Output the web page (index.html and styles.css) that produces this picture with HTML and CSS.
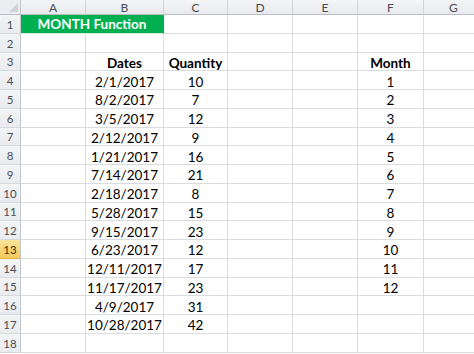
FILE: index.html
```html
<!DOCTYPE html>
<html>
<head>
<meta charset="utf-8">
<link rel="stylesheet" href="styles.css">
</head>
<body>
<div class="sheet">
  <div class="row head">
    <div class="rh corner"><span class="tri"></span></div>
    <div class="c ca ch">A</div><div class="c cb ch">B</div><div class="c cc ch">C</div><div class="c cd ch">D</div><div class="c ce ch">E</div><div class="c cf ch">F</div><div class="c cg ch">G</div>
  </div>
  <div class="row">
    <div class="rh">1</div>
    <div class="c cab title">MONTH Function</div><div class="c cc"></div><div class="c cd"></div><div class="c ce"></div><div class="c cf"></div><div class="c cg"></div>
  </div>
  <div class="row">
    <div class="rh">2</div>
    <div class="c ca"></div><div class="c cb"></div><div class="c cc"></div><div class="c cd"></div><div class="c ce"></div><div class="c cf"></div><div class="c cg"></div>
  </div>
  <div class="row">
    <div class="rh">3</div>
    <div class="c ca"></div><div class="c cb b">Dates</div><div class="c cc b">Quantity</div><div class="c cd"></div><div class="c ce"></div><div class="c cf b">Month</div><div class="c cg"></div>
  </div>
  <div class="row">
    <div class="rh">4</div>
    <div class="c ca"></div><div class="c cb">2/1/2017</div><div class="c cc">10</div><div class="c cd"></div><div class="c ce"></div><div class="c cf">1</div><div class="c cg"></div>
  </div>
  <div class="row">
    <div class="rh">5</div>
    <div class="c ca"></div><div class="c cb">8/2/2017</div><div class="c cc">7</div><div class="c cd"></div><div class="c ce"></div><div class="c cf">2</div><div class="c cg"></div>
  </div>
  <div class="row">
    <div class="rh">6</div>
    <div class="c ca"></div><div class="c cb">3/5/2017</div><div class="c cc">12</div><div class="c cd"></div><div class="c ce"></div><div class="c cf">3</div><div class="c cg"></div>
  </div>
  <div class="row">
    <div class="rh">7</div>
    <div class="c ca"></div><div class="c cb">2/12/2017</div><div class="c cc">9</div><div class="c cd"></div><div class="c ce"></div><div class="c cf">4</div><div class="c cg"></div>
  </div>
  <div class="row">
    <div class="rh">8</div>
    <div class="c ca"></div><div class="c cb">1/21/2017</div><div class="c cc">16</div><div class="c cd"></div><div class="c ce"></div><div class="c cf">5</div><div class="c cg"></div>
  </div>
  <div class="row">
    <div class="rh">9</div>
    <div class="c ca"></div><div class="c cb">7/14/2017</div><div class="c cc">21</div><div class="c cd"></div><div class="c ce"></div><div class="c cf">6</div><div class="c cg"></div>
  </div>
  <div class="row">
    <div class="rh">10</div>
    <div class="c ca"></div><div class="c cb">2/18/2017</div><div class="c cc">8</div><div class="c cd"></div><div class="c ce"></div><div class="c cf">7</div><div class="c cg"></div>
  </div>
  <div class="row">
    <div class="rh">11</div>
    <div class="c ca"></div><div class="c cb">5/28/2017</div><div class="c cc">15</div><div class="c cd"></div><div class="c ce"></div><div class="c cf">8</div><div class="c cg"></div>
  </div>
  <div class="row">
    <div class="rh">12</div>
    <div class="c ca"></div><div class="c cb">9/15/2017</div><div class="c cc">23</div><div class="c cd"></div><div class="c ce"></div><div class="c cf">9</div><div class="c cg"></div>
  </div>
  <div class="row">
    <div class="rh active">13</div>
    <div class="c ca"></div><div class="c cb">6/23/2017</div><div class="c cc">12</div><div class="c cd"></div><div class="c ce"></div><div class="c cf">10</div><div class="c cg"></div>
  </div>
  <div class="row">
    <div class="rh">14</div>
    <div class="c ca"></div><div class="c cb">12/11/2017</div><div class="c cc">17</div><div class="c cd"></div><div class="c ce"></div><div class="c cf">11</div><div class="c cg"></div>
  </div>
  <div class="row">
    <div class="rh">15</div>
    <div class="c ca"></div><div class="c cb">11/17/2017</div><div class="c cc">23</div><div class="c cd"></div><div class="c ce"></div><div class="c cf">12</div><div class="c cg"></div>
  </div>
  <div class="row">
    <div class="rh">16</div>
    <div class="c ca"></div><div class="c cb">4/9/2017</div><div class="c cc">31</div><div class="c cd"></div><div class="c ce"></div><div class="c cf"></div><div class="c cg"></div>
  </div>
  <div class="row">
    <div class="rh">17</div>
    <div class="c ca"></div><div class="c cb">10/28/2017</div><div class="c cc">42</div><div class="c cd"></div><div class="c ce"></div><div class="c cf"></div><div class="c cg"></div>
  </div>
  <div class="row">
    <div class="rh">18</div>
    <div class="c ca"></div><div class="c cb"></div><div class="c cc"></div><div class="c cd"></div><div class="c ce"></div><div class="c cf"></div><div class="c cg"></div>
  </div>
</div>
</body>
</html>
```

FILE: styles.css
```css
html, body {
  margin: 0;
  padding: 0;
  background: #ffffff;
  overflow: hidden;
}
.sheet {
  width: 474px;
  height: 354px;
  overflow: hidden;
  font-family: Lato, "Open Sans", sans-serif;
  font-size: 13.5px;
  color: #000;
}
.row {
  display: flex;
  height: 18.75px;
}
.row.head {
  height: 15px;
}
.rh {
  flex: 0 0 21px;
  box-sizing: border-box;
  background: linear-gradient(#f3f4f6, #e9ebee);
  border-right: 1px solid #c3c7cc;
  border-bottom: 1px solid #d5d8dc;
  color: #4b4e55;
  font-size: 11.5px;
  display: flex;
  align-items: center;
  justify-content: center;
  padding-top: 1px;
}
.rh.active {
  background: linear-gradient(#fbe39a, #f6c95a);
  border-bottom-color: #e0b24c;
  color: #3d3000;
}
.corner {
  position: relative;
  background: #ebedf0;
  border-bottom: 1px solid #b9bec5;
}
.tri {
  position: absolute;
  right: 2px;
  bottom: 2px;
  width: 0;
  height: 0;
  border-left: 9px solid transparent;
  border-bottom: 9px solid #cfd3d8;
}
.c {
  box-sizing: border-box;
  border-right: 1px solid #dadcdf;
  border-bottom: 1px solid #dadcdf;
  display: flex;
  align-items: center;
  justify-content: center;
  padding-top: 3px;
  white-space: nowrap;
}
.ch {
  background: linear-gradient(#f4f5f7, #e8eaed);
  border-right: 1px solid #d0d3d8;
  border-bottom: 1px solid #b9bec5;
  color: #4b4e55;
  font-size: 12px;
  padding-top: 0;
}
.ca { flex: 0 0 65px; }
.cb { flex: 0 0 78px; }
.cab { flex: 0 0 143px; }
.cc { flex: 0 0 64px; }
.cd { flex: 0 0 65px; }
.ce { flex: 0 0 65px; }
.cf { flex: 0 0 66px; }
.cg { flex: 1 0 60px; }
.title {
  background: #00b050;
  color: #ffffff;
  font-weight: 700;
  border-right-color: #00b050;
  border-bottom-color: #d9e8dc;
  padding-top: 0;
}
.b {
  font-weight: 700;
}
```
